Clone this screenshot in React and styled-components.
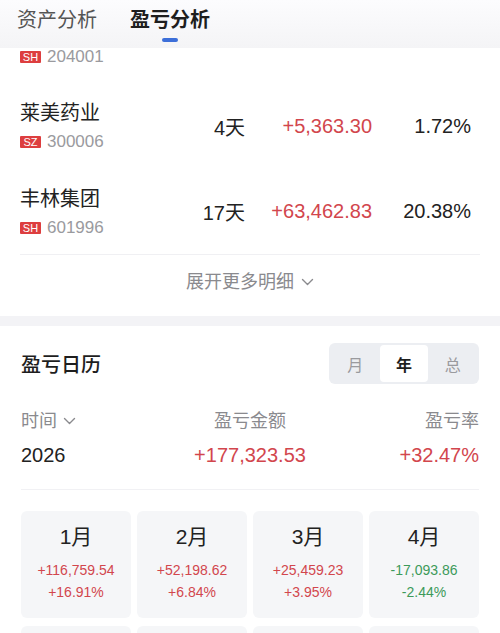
import React from "react";
import styled, { createGlobalStyle } from "styled-components";

const GlobalStyle = createGlobalStyle`
  body {
    margin: 0;
    background: #fff;
    font-family: "Liberation Sans", "Noto Sans CJK SC", sans-serif;
    color: #222;
  }
`;

const RED = "#d2464d";
const GREEN = "#3c9a5a";

const Page = styled.div`
  width: 500px;
  height: 633px;
  overflow: hidden;
  background: #fff;
`;

const Header = styled.div`
  height: 48px;
  display: flex;
  gap: 33px;
  padding-left: 17px;
  background: linear-gradient(#fcfcfe, #f4f4f6);
`;

const Tab = styled.div`
  position: relative;
  font-size: 20px;
  line-height: 41px;
  color: ${(p) => (p.$active ? "#1e1e1e" : "#555")};
  font-weight: ${(p) => (p.$active ? 600 : 400)};
`;

const Underline = styled.div`
  position: absolute;
  left: 50%;
  top: 38px;
  width: 16px;
  height: 4px;
  margin-left: -8px;
  border-radius: 2px;
  background: #3d6fd9;
`;

const List = styled.div`
  padding: 0 20px;
`;

const PartialRow = styled.div`
  height: 35px;
`;

const Row = styled.div`
  height: ${(p) => p.$h}px;
  display: flex;
  align-items: center;
  padding-right: 9px;
  border-bottom: ${(p) => (p.$line ? "1px solid #f0f0f3" : "none")};
`;

const NameBlock = styled.div`
  flex: 1;
  display: flex;
  flex-direction: column;
  gap: 4px;
`;

const Name = styled.div`
  font-size: 20px;
  line-height: 28px;
  color: #222;
`;

const CodeLine = styled.div`
  display: flex;
  align-items: center;
  gap: 6px;
  font-size: 17px;
  line-height: ${(p) => p.$lh || 22}px;
  color: #9a9a9e;
`;

const Badge = styled.span`
  display: inline-block;
  width: 21px;
  height: 12px;
  line-height: 12px;
  text-align: center;
  font-size: 11px;
  color: #fff;
  background: #dd3e3f;
  border-radius: 1px;
`;

const Cell = styled.div`
  width: ${(p) => p.$w}px;
  text-align: right;
  font-size: 20px;
  color: ${(p) => p.$color || "#222"};
`;

const Expand = styled.div`
  height: 61px;
  display: flex;
  justify-content: center;
  align-items: flex-start;
  padding-top: 16px;
  box-sizing: border-box;
  gap: 7px;
  font-size: 18px;
  line-height: 22px;
  color: #8a8a8e;
`;

const Chevron = ({ color = "#8a8a8e" }) => (
  <svg width="13" height="22" viewBox="0 0 13 22">
    <path d="M1.5 8.5 L6.5 13.5 L11.5 8.5" fill="none" stroke={color} strokeWidth="1.4" strokeLinecap="round" strokeLinejoin="round" />
  </svg>
);

const Band = styled.div`
  height: 10px;
  background: #f3f3f6;
`;

const Section = styled.div`
  padding: 17px 21px 0 21px;
`;

const TitleRow = styled.div`
  display: flex;
  justify-content: space-between;
  align-items: center;
  height: 41px;
`;

const Title = styled.div`
  font-size: 20px;
  font-weight: 500;
  color: #1e1e1e;
`;

const Segmented = styled.div`
  display: flex;
  padding: 2px;
  width: 150px;
  box-sizing: border-box;
  height: 41px;
  background: #eceef2;
  border-radius: 6px;
`;

const Seg = styled.div`
  flex: 1;
  display: flex;
  align-items: center;
  justify-content: center;
  font-size: 16px;
  border-radius: 4px;
  background: ${(p) => (p.$active ? "#fff" : "transparent")};
  color: ${(p) => (p.$active ? "#1e1e1e" : "#9a9a9e")};
  font-weight: ${(p) => (p.$active ? 600 : 400)};
`;

const StatGrid = styled.div`
  display: grid;
  grid-template-columns: 1fr 1fr 1fr;
  padding-top: 25px;
  padding-bottom: 22px;
  border-bottom: 1px solid #f1f1f4;
`;

const StatHead = styled.div`
  display: flex;
  align-items: center;
  justify-content: ${(p) => p.$align};
  gap: 6px;
  font-size: 18px;
  line-height: 24px;
  color: #8a8a8e;
`;

const StatValue = styled.div`
  text-align: ${(p) => p.$align};
  font-size: 20px;
  line-height: 24px;
  margin-top: 10px;
  color: ${(p) => p.$color || "#222"};
`;

const Months = styled.div`
  display: grid;
  grid-template-columns: repeat(4, 1fr);
  gap: 8px 6px;
  padding-top: 21px;
`;

const MonthCard = styled.div`
  height: 107px;
  border-radius: 6px;
  background: #f5f6f8;
  display: flex;
  flex-direction: column;
  align-items: center;
  padding-top: 13px;
  box-sizing: border-box;
`;

const MonthLabel = styled.div`
  font-size: 21px;
  line-height: 26px;
  color: #222;
  margin-bottom: 9px;
`;

const MonthNum = styled.div`
  font-size: 14px;
  line-height: 22px;
  color: ${(p) => p.$color};
`;

const stocks = [
  { name: "莱美药业", ex: "SZ", code: "300006", days: "4天", amt: "+5,363.30", pct: "1.72%" },
  { name: "丰林集团", ex: "SH", code: "601996", days: "17天", amt: "+63,462.83", pct: "20.38%" },
];

const months = [
  { m: "1月", amt: "+116,759.54", pct: "+16.91%", up: true },
  { m: "2月", amt: "+52,198.62", pct: "+6.84%", up: true },
  { m: "3月", amt: "+25,459.23", pct: "+3.95%", up: true },
  { m: "4月", amt: "-17,093.86", pct: "-2.44%", up: false },
];

export default function App() {
  return (
    <Page>
      <GlobalStyle />
      <Header>
        <Tab>资产分析</Tab>
        <Tab $active>
          盈亏分析
          <Underline />
        </Tab>
      </Header>
      <List>
        <PartialRow>
          <CodeLine $lh={18}>
            <Badge>SH</Badge>
            204001
          </CodeLine>
        </PartialRow>
        {stocks.map((s, i) => (
          <Row key={s.code} $h={i === stocks.length - 1 ? 85 : 86} $line={i === stocks.length - 1}>
            <NameBlock>
              <Name>{s.name}</Name>
              <CodeLine>
                <Badge>{s.ex}</Badge>
                {s.code}
              </CodeLine>
            </NameBlock>
            <Cell $w={60}>{s.days}</Cell>
            <Cell $w={127} $color={RED}>{s.amt}</Cell>
            <Cell $w={99}>{s.pct}</Cell>
          </Row>
        ))}
        <Expand>
          展开更多明细
          <Chevron />
        </Expand>
      </List>
      <Band />
      <Section>
        <TitleRow>
          <Title>盈亏日历</Title>
          <Segmented>
            <Seg>月</Seg>
            <Seg $active>年</Seg>
            <Seg>总</Seg>
          </Segmented>
        </TitleRow>
        <StatGrid>
          <div>
            <StatHead $align="flex-start">
              时间
              <Chevron />
            </StatHead>
            <StatValue $align="left">2026</StatValue>
          </div>
          <div>
            <StatHead $align="center">盈亏金额</StatHead>
            <StatValue $align="center" $color={RED}>+177,323.53</StatValue>
          </div>
          <div>
            <StatHead $align="flex-end">盈亏率</StatHead>
            <StatValue $align="right" $color={RED}>+32.47%</StatValue>
          </div>
        </StatGrid>
        <Months>
          {months.map((m) => (
            <MonthCard key={m.m}>
              <MonthLabel>{m.m}</MonthLabel>
              <MonthNum $color={m.up ? RED : GREEN}>{m.amt}</MonthNum>
              <MonthNum $color={m.up ? RED : GREEN}>{m.pct}</MonthNum>
            </MonthCard>
          ))}
          {[5, 6, 7, 8].map((n) => (
            <MonthCard key={n} />
          ))}
        </Months>
      </Section>
    </Page>
  );
}
